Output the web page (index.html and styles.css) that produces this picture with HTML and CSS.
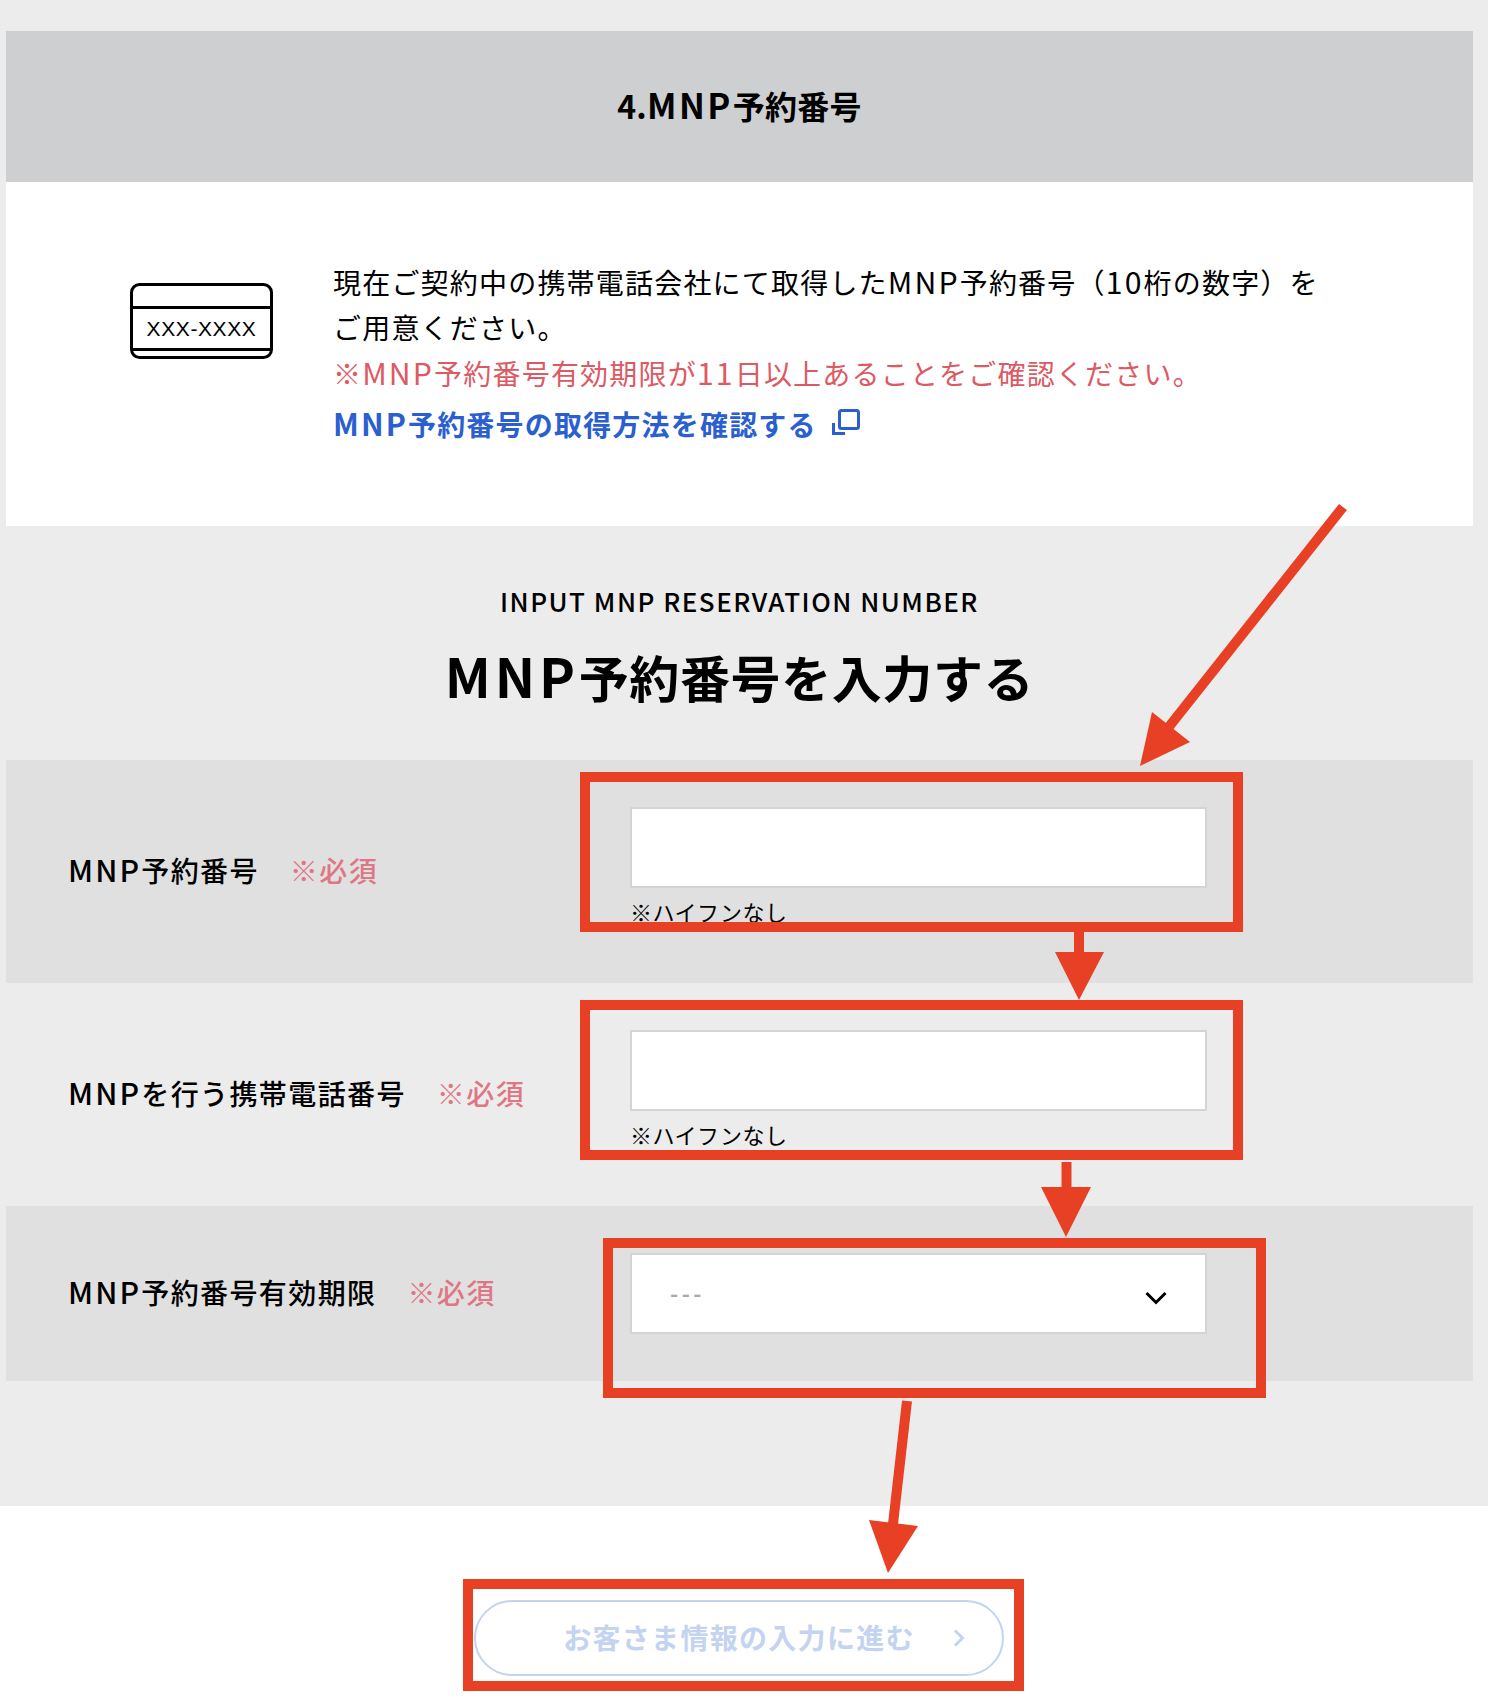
FILE: index.html
```html
<!DOCTYPE html>
<html lang="ja">
<head>
    <meta charset="UTF-8">
    <meta name="viewport" content="width=device-width, initial-scale=1.0">
    <title>MNP予約番号</title>
    <link rel="stylesheet" href="styles.css">
</head>
<body>
<div class="top">
    <h2 class="step_title">4.<span class="lat">MNP</span>予約番号</h2>
    <div class="info">
        <svg class="info_icon" width="143" height="76" viewBox="0 0 143 76">
            <rect x="1.5" y="1.5" width="140" height="73" rx="8" fill="none" stroke="#000" stroke-width="3"/>
            <path d="M1 24.5H142M1 66.5H142" fill="none" stroke="#000" stroke-width="3"/>
            <text class="info_icon_text" x="71.5" y="52.500" text-anchor="middle">XXX-XXXX</text>
        </svg>
        <div class="info_text">
            <p>現在ご契約中の携帯電話会社にて取得した<span class="lat">MNP</span>予約番号（<span class="lat">10</span>桁の数字）を<br>ご用意ください。</p>
            <p class="info_red">※<span class="lat">MNP</span>予約番号有効期限が<span class="lat">11</span>日以上あることをご確認ください。</p>
            <a class="info_link" href="#"><span><span class="lat">MNP</span>予約番号の取得方法を確認する</span>
                <svg class="info_link_icon" width="30" height="28" viewBox="0 0 30 28">
                    <rect x="8.5" y="2.5" width="19" height="18" rx="2" fill="none" stroke="#2b5fcf" stroke-width="3"/>
                    <path d="M2.5 15V25.5H14" fill="none" stroke="#2b5fcf" stroke-width="3"/>
                </svg>
            </a>
        </div>
    </div>
    <div class="form_head">
        <p class="form_sub">INPUT MNP RESERVATION NUMBER</p>
        <h1 class="form_title"><span class="lat">MNP</span>予約番号を入力する</h1>
    </div>
    <div class="form_row form_row_dark">
        <div class="form_label"><span class="lat">MNP</span>予約番号<span class="form_req">※必須</span></div>
        <div class="form_field">
            <input class="form_input" type="text">
            <p class="form_hint">※ハイフンなし</p>
        </div>
    </div>
    <div class="form_row">
        <div class="form_label"><span class="lat">MNP</span>を行う携帯電話番号<span class="form_req">※必須</span></div>
        <div class="form_field">
            <input class="form_input" type="text">
            <p class="form_hint">※ハイフンなし</p>
        </div>
    </div>
    <div class="form_row form_row_dark">
        <div class="form_label"><span class="lat">MNP</span>予約番号有効期限<span class="form_req">※必須</span></div>
        <div class="form_field">
            <div class="select_wrap">
                <select class="form_select"><option>---</option></select>
                <svg class="select_arrow" width="24" height="16" viewBox="0 0 24 16">
                    <path d="M2.5 3L12 12.5L21.5 3" fill="none" stroke="#000" stroke-width="3"/>
                </svg>
            </div>
        </div>
    </div>
</div>
<div class="bottom">
    <a class="next_btn" href="#">お客さま情報の入力に進む
        <svg class="next_btn_icon" width="12" height="18" viewBox="0 0 12 18">
            <path d="M2 1.5L9.5 9L2 16.5" fill="none" stroke="#c3d3f0" stroke-width="3"/>
        </svg>
    </a>
</div>

<!-- red marks drawn over the screenshot -->
<svg class="marks" width="1488" height="1704" viewBox="0 0 1488 1704">
    <g fill="none" stroke="#e84025" stroke-width="10">
        <rect x="585" y="777" width="653" height="150"/>
        <rect x="585" y="1005" width="653" height="150"/>
        <rect x="608" y="1243" width="653" height="150"/>
        <rect x="468" y="1584" width="551" height="102"/>
        <path d="M1343 507L1168 728"/>
        <path d="M1079 932V954"/>
        <path d="M1066.500 1162V1189"/>
        <path d="M907 1401L893 1524"/>
    </g>
    <g fill="#e84025">
        <polygon points="1152,712 1190,742 1140,766"/>
        <polygon points="1055,952 1104,952 1079,1000"/>
        <polygon points="1041,1187 1091,1187 1066,1237"/>
        <polygon points="869,1520 918,1526 888,1573"/>
    </g>
</svg>
</body>
</html>
```

FILE: styles.css
```css
* {
    box-sizing: border-box;
    margin: 0;
    padding: 0;
}
body {
    position: relative;
    background: #fff;
    color: #000;
    font-family: "Noto Sans CJK JP", "Noto Sans", sans-serif;
    width: 1488px;
    height: 1704px;
    overflow: hidden;
}
.lat {
    font-size: 1.08em;
    line-height: 0;
    letter-spacing: 0.07em;
}
.top {
    background: #ececec;
    padding: 31px 15px 125px 6px;
}
.step_title {
    background: #cecfd1;
    height: 151px;
    line-height: 149px;
    text-align: center;
    font-size: 32px;
    font-weight: 700;
    letter-spacing: 0.3px;
}
.info {
    display: flex;
    align-items: flex-start;
    gap: 60px;
    background: #fff;
    height: 344px;
    padding: 78px 0 0 124px;
}
.info_icon {
    margin-top: 23px;
    flex-shrink: 0;
}
.info_icon_text {
    font-family: "Liberation Sans", sans-serif;
    font-size: 21px;
    letter-spacing: 0.6px;
}
.info_text {
    font-size: 28px;
    line-height: 45px;
    letter-spacing: 1.2px;
}
.info_red {
    color: #dc5a64;
    padding-top: 1px;
}
.info_link {
    display: flex;
    align-items: center;
    gap: 14px;
    margin-top: 6px;
    color: #2b5fcf;
    font-weight: 700;
    text-decoration: none;
}
.info_link_icon {
    margin-top: -6px;
}
.form_head {
    text-align: center;
    padding-top: 57px;
    padding-bottom: 46px;
}
.form_sub {
    font-size: 26px;
    line-height: 36px;
    font-weight: 500;
    letter-spacing: 1.5px;
}
.form_title {
    margin-top: 20px;
    font-size: 50px;
    line-height: 75px;
    font-weight: 700;
    letter-spacing: 0.6px;
}
.form_row {
    display: flex;
    align-items: center;
    padding: 47px 0;
}
.form_row_dark {
    background: #e0e0e0;
}
.form_label {
    width: 624px;
    padding-left: 62px;
    padding-bottom: 3px;
    font-size: 28px;
    font-weight: 500;
    letter-spacing: 1.4px;
}
.form_req {
    margin-left: 31px;
    color: #de7684;
}
.form_field {
    width: 577px;
}
.form_input,
.form_select {
    display: block;
    width: 100%;
    height: 81px;
    background: #fff;
    border: 2px solid #d4d4d4;
    border-radius: 0;
}
.form_hint {
    margin-top: 1px;
    padding-bottom: 2px;
    font-size: 22px;
    line-height: 45px;
    letter-spacing: 0.5px;
}
.select_wrap {
    position: relative;
}
.form_select {
    appearance: none;
    padding: 0 0 4px 38px;
    font-family: inherit;
    font-size: 22px;
    font-weight: 700;
    letter-spacing: 3.5px;
    color: #aaa;
}
.select_arrow {
    position: absolute;
    right: 39px;
    top: 37px;
}
.bottom {
    padding-top: 94px;
}
.next_btn {
    display: block;
    position: relative;
    width: 530px;
    height: 76px;
    margin-left: 474px;
    border: 2px solid #c3d3f0;
    border-radius: 38px;
    line-height: 70px;
    text-align: center;
    font-size: 28px;
    font-weight: 700;
    letter-spacing: 1.3px;
    color: #c3d3f0;
    text-decoration: none;
}
.next_btn_icon {
    position: absolute;
    right: 37px;
    top: 27px;
}
.marks {
    position: absolute;
    top: 0;
    left: 0;
    pointer-events: none;
}
```
